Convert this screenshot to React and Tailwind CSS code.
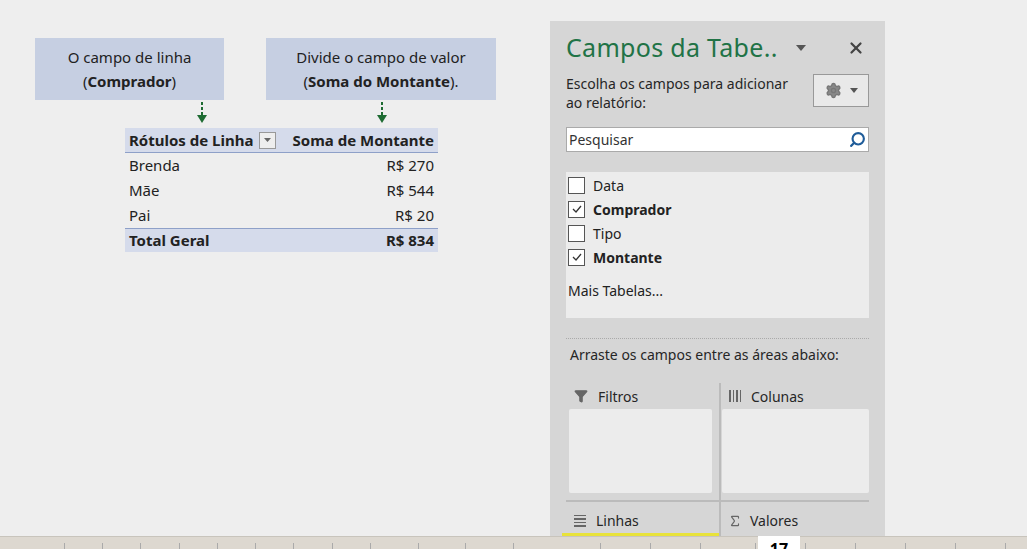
import { Search, Settings, X, Filter, Sigma } from 'lucide-react';

const font = { fontFamily: '"Noto Sans", "Open Sans", sans-serif' };

function Arrow() {
  return (
    <svg width="10" height="22" viewBox="0 0 10 22">
      <rect x="4" y="0" width="2" height="3" fill="#1e6b32" />
      <rect x="4" y="5" width="2" height="3" fill="#1e6b32" />
      <rect x="4" y="10" width="2" height="3" fill="#1e6b32" />
      <polygon points="0,13 10,13 5,21" fill="#1e6b32" />
    </svg>
  );
}

function Check({ on, label }) {
  return (
    <div className="flex items-center gap-2 h-[24px]">
      <div className="w-[17px] h-[17px] border border-[#555] bg-white flex items-center justify-center">
        {on && (
          <svg width="12" height="12" viewBox="0 0 12 12"><path d="M2 6l3 3 5-6" stroke="#333" strokeWidth="1.3" fill="none" /></svg>
        )}
      </div>
      <span className={on ? 'font-bold text-[#222]' : 'text-[#222]'}>{label}</span>
    </div>
  );
}

export default function App() {
  const rows = [['Brenda', 'R$ 270'], ['Mãe', 'R$ 544'], ['Pai', 'R$ 20']];
  return (
    <div className="w-[1027px] h-[549px] bg-[#eeeeee] flex flex-col overflow-hidden" style={font}>
      <div className="flex h-[536px]">
        <div className="w-[550px] pt-[38px] text-[15px] text-[#222]">
          <div className="flex">
            <div className="ml-[35px] w-[189px] h-[62px] bg-[#c6cfe2] flex flex-col items-center justify-center leading-[24px]">
              <span>O campo de linha</span>
              <span>(<b>Comprador</b>)</span>
            </div>
            <div className="ml-[42px] w-[230px] h-[62px] bg-[#c6cfe2] flex flex-col items-center justify-center leading-[24px]">
              <span>Divide o campo de valor</span>
              <span>(<b>Soma do Montante</b>).</span>
            </div>
          </div>
          <div className="flex h-[24px] pt-[2px]">
            <div className="ml-[197px]"><Arrow /></div>
            <div className="ml-[170px]"><Arrow /></div>
          </div>
          <div className="ml-[125px] w-[313px] mt-[4px]">
            <div className="h-[25px] bg-[#d5dbeb] border-b border-[#8ea0c8] flex items-center px-[4px] font-bold">
              <span>Rótulos de Linha</span>
              <div className="ml-[6px] w-[17px] h-[17px] border border-[#999] bg-[#eee] flex items-center justify-center">
                <svg width="7" height="4"><polygon points="0,0 7,0 3.5,4" fill="#666" /></svg>
              </div>
              <span className="ml-auto">Soma de Montante</span>
            </div>
            {rows.map(([n, v]) => (
              <div key={n} className="h-[25px] flex items-center justify-between px-[4px]">
                <span>{n}</span><span>{v}</span>
              </div>
            ))}
            <div className="h-[24px] bg-[#d5dbeb] border-t border-[#8ea0c8] flex items-center justify-between px-[4px] font-bold">
              <span>Total Geral</span><span>R$ 834</span>
            </div>
          </div>
        </div>
        <div className="w-[335px] mt-[21px] bg-[#d6d6d6] flex flex-col px-[16px] text-[14px] text-[#262626]">
          <div className="flex items-center h-[53px] pt-[2px]">
            <span className="text-[25px] text-[#217346] tracking-[0.3px]">Campos da Tabe..</span>
            <svg className="ml-[18px]" width="10" height="6"><polygon points="0,0 10,0 5,6" fill="#555" /></svg>
            <X className="ml-auto mr-[4px]" size={18} strokeWidth={3} color="#444" />
          </div>
          <div className="flex items-start">
            <div className="leading-[19px] pt-[1px]">Escolha os campos para adicionar<br />ao relatório:</div>
            <div className="ml-auto mt-[1px] w-[56px] h-[33px] border border-[#999] bg-[#e9e9e9] flex items-center justify-center gap-[8px]">
              <Settings size={17} color="#777" fill="#888" />
              <svg width="8" height="5"><polygon points="0,0 8,0 4,5" fill="#555" /></svg>
            </div>
          </div>
          <div className="mt-[15px] h-[26px] bg-white border border-[#aaa] flex items-center px-[2px]">
            <span className="text-[#333]">Pesquisar</span>
            <Search className="ml-auto" size={17} strokeWidth={3} color="#1f5c99" style={{ transform: 'scaleX(-1)' }} />
          </div>
          <div className="mt-[20px] h-[149px] bg-[#ececec] px-[2px] pt-[1px]">
            <Check label="Data" />
            <Check on label="Comprador" />
            <Check label="Tipo" />
            <Check on label="Montante" />
            <div className="mt-[11px] text-[#222]">Mais Tabelas...</div>
          </div>
          <div className="mt-[20px] border-t border-dotted border-[#aaa]" />
          <div className="mt-[5px] pl-[4px] h-[26px]">Arraste os campos entre as áreas abaixo:</div>
          <div className="mt-[14px] flex flex-1">
            <div className="w-[153px] flex flex-col">
              <div className="flex items-center gap-[10px] h-[26px] pl-[8px]">
                <Filter size={14} fill="#666" color="#666" />
                <span>Filtros</span>
              </div>
              <div className="ml-[3px] mr-[7px] h-[84px] bg-[#ececec] rounded-[2px]" />
              <div className="mt-[7px] border-t-2 border-[#bbb] flex items-center gap-[10px] pt-[8px] pl-[8px]">
                <div className="flex flex-col gap-[2px]">
                  {[0, 1, 2, 3].map(i => <div key={i} className="w-[12px] h-[1.5px] bg-[#666]" />)}
                </div>
                <span>Linhas</span>
              </div>
              <div className="mt-[2px] ml-[-4px] h-[3px] bg-[#e8e23a]" />
            </div>
            <div className="w-[2px] bg-[#bbb]" />
            <div className="flex-1 flex flex-col">
              <div className="flex items-center gap-[10px] h-[26px] pl-[8px]">
                <div className="flex gap-[2px]">
                  {[0, 1, 2, 3].map(i => <div key={i} className="w-[1.5px] h-[12px] bg-[#666]" />)}
                </div>
                <span>Colunas</span>
              </div>
              <div className="ml-[1px] h-[84px] bg-[#ececec] rounded-[2px]" />
              <div className="mt-[7px] border-t-2 border-[#bbb] flex items-center gap-[8px] pt-[8px] pl-[7px]">
                <Sigma size={14} color="#666" />
                <span>Valores</span>
              </div>
            </div>
          </div>
        </div>
      </div>
      <div className="h-[13px] bg-[#ddd8d0] border-t border-[#c8c4bc] flex items-end relative">
        {[64, 102, 140, 179, 217, 255, 293, 332, 370, 418, 465, 513, 600, 650, 700, 755, 805, 855, 905, 955, 1005].map(x => (
          <div key={x} className="absolute bottom-0 w-px h-[6px] bg-[#aaa]" style={{ left: x }} />
        ))}
        <div className="absolute left-[758px] top-[-1px] w-[42px] h-[14px] bg-white text-[16px] font-bold text-center leading-[26px] overflow-hidden">17</div>
      </div>
    </div>
  );
}
